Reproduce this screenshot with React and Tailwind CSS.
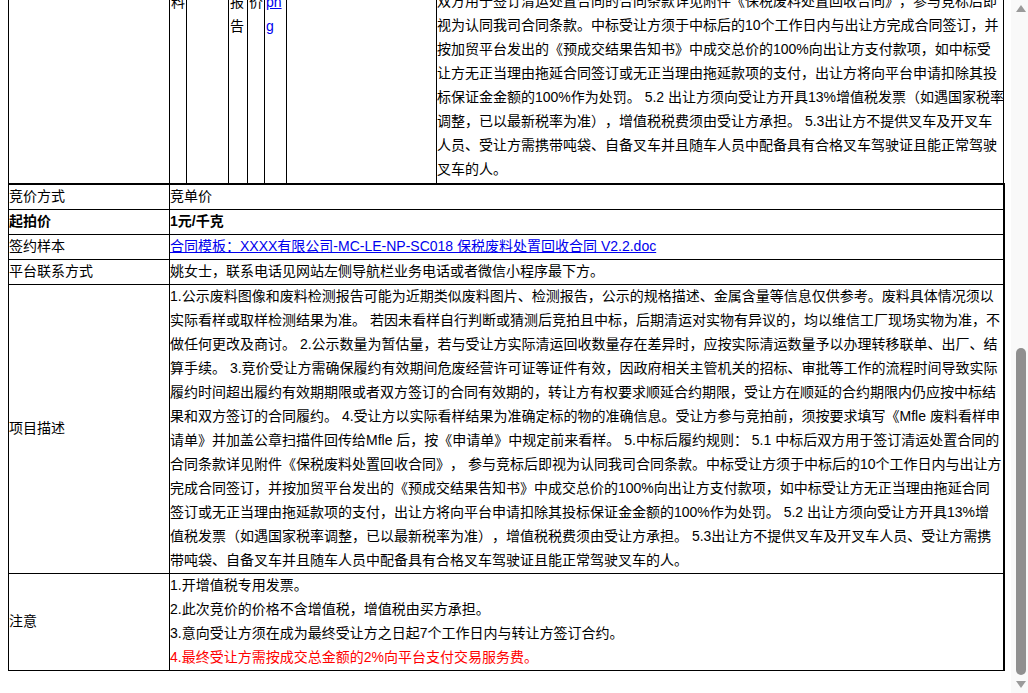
const topLines = [
  "双方用于签订清运处置合同的合同条款详见附件《保税废料处置回收合同》，参与竞标后即",
  "视为认同我司合同条款。中标受让方须于中标后的10个工作日内与出让方完成合同签订，并",
  "按加贸平台发出的《预成交结果告知书》中成交总价的100%向出让方支付款项，如中标受",
  "让方无正当理由拖延合同签订或无正当理由拖延款项的支付，出让方将向平台申请扣除其投",
  "标保证金金额的100%作为处罚。 5.2 出让方须向受让方开具13%增值税发票（如遇国家税率",
  "调整，已以最新税率为准），增值税税费须由受让方承担。 5.3出让方不提供叉车及开叉车",
  "人员、受让方需携带吨袋、自备叉车并且随车人员中配备具有合格叉车驾驶证且能正常驾驶",
  "叉车的人。",
];

const descLines = [
  "1.公示废料图像和废料检测报告可能为近期类似废料图片、检测报告，公示的规格描述、金属含量等信息仅供参考。废料具体情况须以",
  "实际看样或取样检测结果为准。 若因未看样自行判断或猜测后竞拍且中标，后期清运对实物有异议的，均以维信工厂现场实物为准，不",
  "做任何更改及商讨。 2.公示数量为暂估量，若与受让方实际清运回收数量存在差异时，应按实际清运数量予以办理转移联单、出厂、结",
  "算手续。 3.竞价受让方需确保履约有效期间危废经营许可证等证件有效，因政府相关主管机关的招标、审批等工作的流程时间导致实际",
  "履约时间超出履约有效期期限或者双方签订的合同有效期的，转让方有权要求顺延合约期限，受让方在顺延的合约期限内仍应按中标结",
  "果和双方签订的合同履约。 4.受让方以实际看样结果为准确定标的物的准确信息。受让方参与竞拍前，须按要求填写《Mfle 废料看样申",
  "请单》并加盖公章扫描件回传给Mfle 后，按《申请单》中规定前来看样。 5.中标后履约规则： 5.1 中标后双方用于签订清运处置合同的",
  "合同条款详见附件《保税废料处置回收合同》， 参与竞标后即视为认同我司合同条款。中标受让方须于中标后的10个工作日内与出让方",
  "完成合同签订，并按加贸平台发出的《预成交结果告知书》中成交总价的100%向出让方支付款项，如中标受让方无正当理由拖延合同",
  "签订或无正当理由拖延款项的支付，出让方将向平台申请扣除其投标保证金金额的100%作为处罚。 5.2 出让方须向受让方开具13%增",
  "值税发票（如遇国家税率调整，已以最新税率为准），增值税税费须由受让方承担。 5.3出让方不提供叉车及开叉车人员、受让方需携",
  "带吨袋、自备叉车并且随车人员中配备具有合格叉车驾驶证且能正常驾驶叉车的人。",
];

const Row = ({ label, bold, children }) => (
  <tr className="border-b border-black">
    <td className={`border-r border-black align-middle ${bold ? "font-bold" : ""}`}>
      <div className="-mt-px mb-px">{label}</div>
    </td>
    <td className={bold ? "font-bold" : ""}>
      <div className="-mt-px mb-px">{children}</div>
    </td>
  </tr>
);

const App = () => {
  return (
    <div className="flex h-[693px] overflow-hidden bg-white text-[14px] leading-6 text-black font-['Liberation_Sans','Noto_Sans_CJK_SC',sans-serif] [text-spacing-trim:space-all]">
      <div className="w-[1011px] shrink-0 pl-2">
        {/* top row is cut by the scroll position, so it is anchored to the bottom */}
        <div className="flex h-[183px] w-[996px] overflow-hidden border-x border-black">
          <div className="w-[161px] shrink-0 border-r border-black" />
          <div className="w-[17px] shrink-0 border-r border-black pl-px -mt-[10px]">料</div>
          <div className="w-[42px] shrink-0 border-r border-black" />
          <div className="flex w-[19px] shrink-0 flex-col border-r border-black pl-px -mt-[10px]">
            <span>报</span>
            <span>告</span>
          </div>
          <div className="w-[17px] shrink-0 border-r border-black pl-px -mt-[10px]">价</div>
          <div className="w-[22px] shrink-0 border-r border-black pl-px -mt-[10px] break-all">
            <a className="text-[#0000ee] underline">png</a>
          </div>
          <div className="w-[150px] shrink-0 border-r border-black" />
          <div className="flex min-w-0 flex-1 flex-col justify-end whitespace-nowrap pb-[2px]">
            {topLines.map((line) => (
              <div key={line}>{line}</div>
            ))}
          </div>
        </div>
        <table className="w-[997px] table-fixed border-collapse border-t-2 border-r-2 border-l border-black">
          <colgroup>
            <col className="w-[161px]" />
            <col />
          </colgroup>
          <tbody>
            <Row label="竞价方式">竞单价</Row>
            <Row label="起拍价" bold>1元/千克</Row>
            <Row label="签约样本">
              <a className="text-[#0000ee] underline">合同模板：XXXX有限公司-MC-LE-NP-SC018 保税废料处置回收合同 V2.2.doc</a>
            </Row>
            <Row label="平台联系方式">姚女士，联系电话见网站左侧导航栏业务电话或者微信小程序最下方。</Row>
            <Row label="项目描述">
              {descLines.map((line) => (
                <div key={line} className="whitespace-nowrap">{line}</div>
              ))}
            </Row>
            <Row label="注意">
              <div>1.开增值税专用发票。</div>
              <div>2.此次竞价的价格不含增值税，增值税由买方承担。</div>
              <div>3.意向受让方须在成为最终受让方之日起7个工作日内与转让方签订合约。</div>
              <div className="text-[#ff0000]">4.最终受让方需按成交总金额的2%向平台支付交易服务费。</div>
            </Row>
          </tbody>
        </table>
      </div>
      {/* scrollbar */}
      <div className="flex w-[17px] shrink-0 flex-col items-center bg-[#f9f9f9] pl-[3px]">
        <svg className="mt-[5px] shrink-0" width="10" height="7" viewBox="0 0 10 7">
          <path d="M5 0 L10 7 L0 7 Z" fill="#9a9a9a" />
        </svg>
        <div className="mt-[336px] h-[327px] w-[10px] shrink-0 rounded-full bg-[#8f8f8f]" />
        <svg className="mt-[6px] shrink-0" width="10" height="7" viewBox="0 0 10 7">
          <path d="M0 0 L10 0 L5 7 Z" fill="#9a9a9a" />
        </svg>
      </div>
    </div>
  );
};

export default App;
